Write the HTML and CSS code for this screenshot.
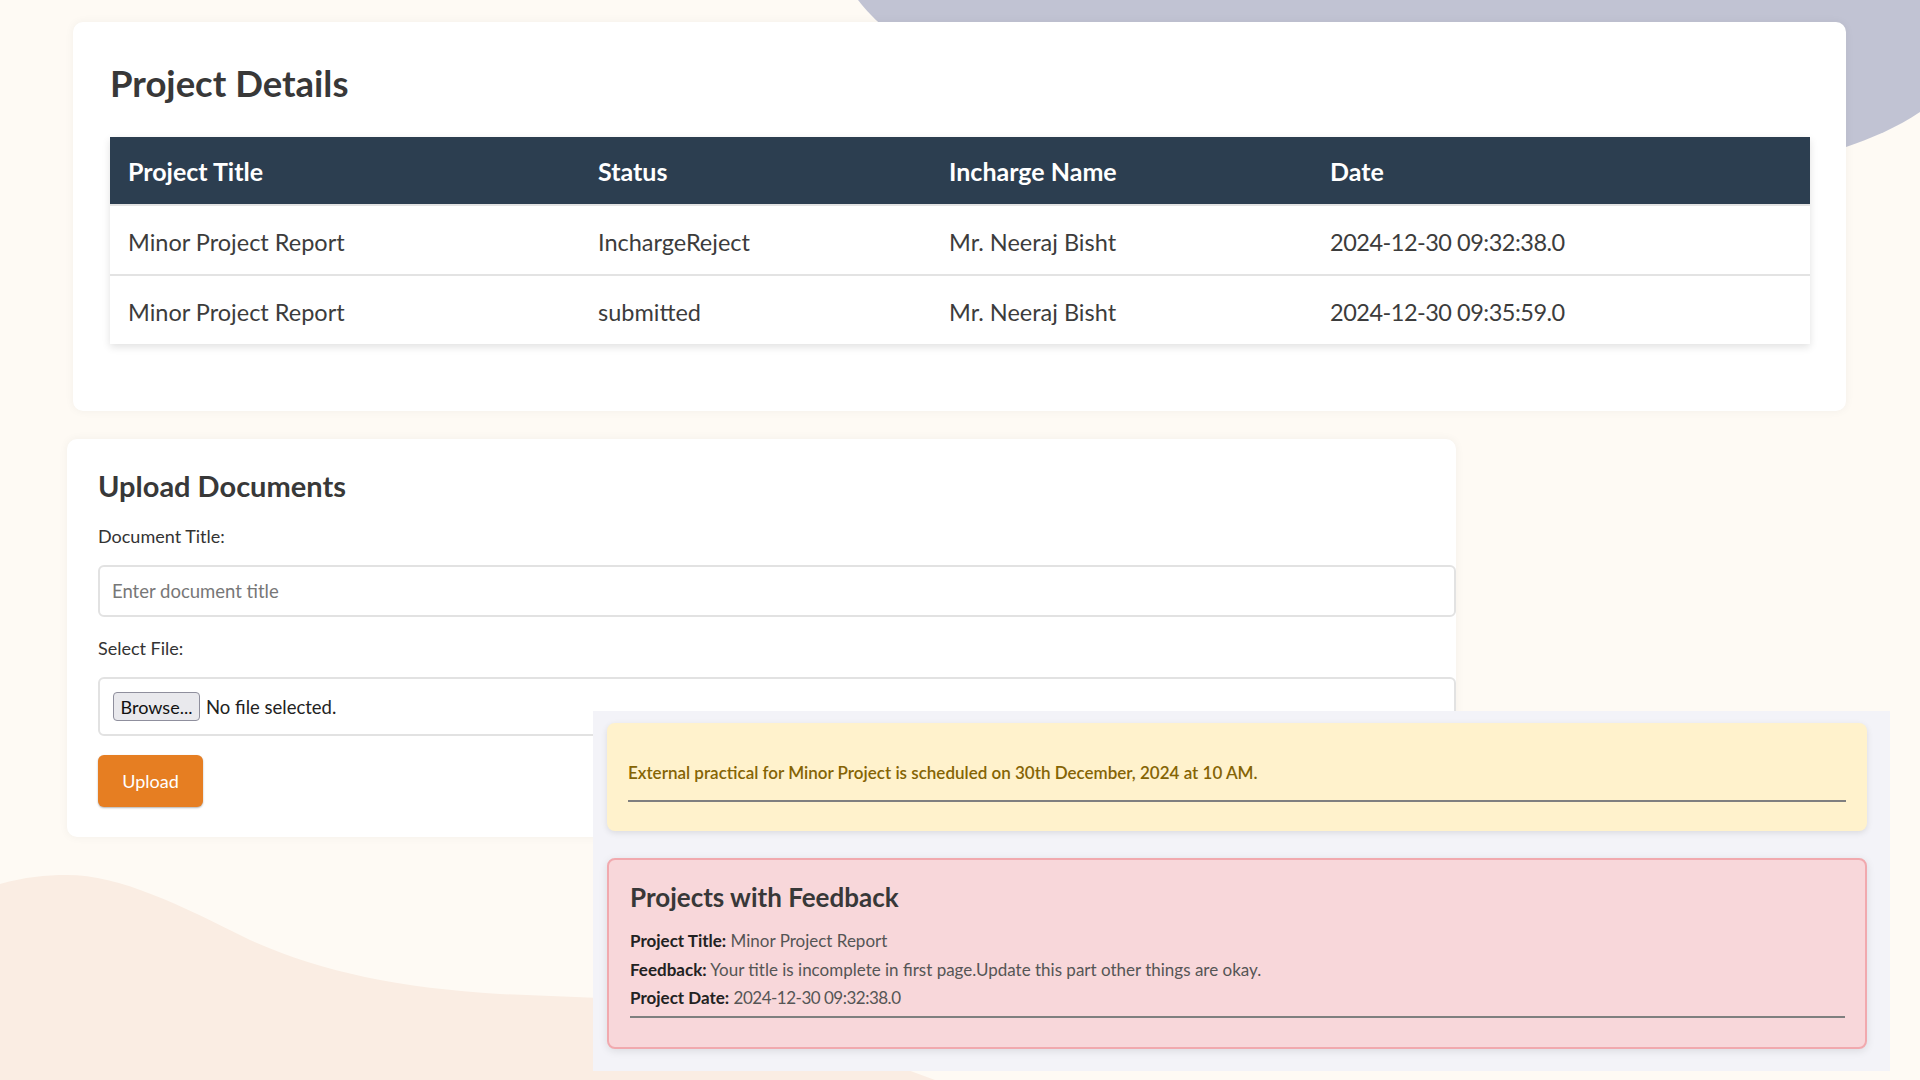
FILE: index.html
```html
<!DOCTYPE html>
<html lang="en">
<head>
<meta charset="utf-8">
<title>Project Details</title>
<link rel="stylesheet" href="styles.css">
</head>
<body>
<svg class="bg-shapes" width="1920" height="1080" viewBox="0 0 1920 1080" aria-hidden="true">
  <path class="blob" d="M858,0 C870,15 880,25 895,35 L1846,147 C1870,139 1898,127 1920,112 L1920,0 Z"/>
  <path class="wave" d="M0,884 C25,877 45,875 67,875 C120,875 180,905 250,940 C320,972 400,988 500,994 L600,998 C700,1002 800,1030 935,1080 L0,1080 Z"/>
</svg>

<main class="page">
  <section class="card details-card">
    <h1 class="card-title">Project Details</h1>
    <table class="project-table">
      <colgroup>
        <col class="c1"><col class="c2"><col class="c3"><col class="c4">
      </colgroup>
      <thead>
        <tr><th>Project Title</th><th>Status</th><th>Incharge Name</th><th>Date</th></tr>
      </thead>
      <tbody>
        <tr><td>Minor Project Report</td><td>InchargeReject</td><td>Mr. Neeraj Bisht</td><td class="date">2024-12-30 09:32:38.0</td></tr>
        <tr><td>Minor Project Report</td><td>submitted</td><td>Mr. Neeraj Bisht</td><td class="date">2024-12-30 09:35:59.0</td></tr>
      </tbody>
    </table>
  </section>

  <section class="card upload-card">
    <h2 class="upload-title">Upload Documents</h2>
    <label class="field-label" for="docTitle">Document Title:</label>
    <input class="text-input" id="docTitle" type="text" placeholder="Enter document title">
    <label class="field-label">Select File:</label>
    <div class="file-box">
      <span class="browse-btn">Browse...</span>
      <span class="file-name">No file selected.</span>
    </div>
    <button class="upload-btn" type="button">Upload</button>
  </section>
</main>

<aside class="notice-panel">
  <div class="alert-box">
    <p class="alert-text">External practical for Minor Project is scheduled on 30th December, 2024 at 10 AM.</p>
    <hr class="rule">
  </div>
  <div class="feedback-box">
    <h3 class="feedback-title">Projects with Feedback</h3>
    <p class="fb-line"><strong>Project Title:</strong> Minor Project Report</p>
    <p class="fb-line"><strong>Feedback:</strong> Your title is incomplete in first page.Update this part other things are okay.</p>
    <p class="fb-line"><strong>Project Date:</strong> <span class="date">2024-12-30 09:32:38.0</span></p>
    <hr class="rule">
  </div>
</aside>
</body>
</html>
```

FILE: styles.css
```css
* { box-sizing: border-box; }

html, body {
  margin: 0;
  padding: 0;
}

body {
  width: 1920px;
  height: 1080px;
  overflow: hidden;
  position: relative;
  background: #fefaf4;
  font-family: "Lato", "Open Sans", sans-serif;
  color: #333;
}

.bg-shapes {
  position: absolute;
  left: 0;
  top: 0;
  z-index: 0;
}
.blob { fill: #c1c3d3; }
.wave { fill: #faede3; }

.page {
  position: relative;
  z-index: 1;
  display: flex;
  flex-direction: column;
  align-items: flex-start;
  padding-top: 22px;
}

.card {
  background: #fff;
  border-radius: 10px;
  box-shadow: 0 0 10px rgba(0, 0, 0, 0.05);
}

/* Project details */
.details-card {
  margin-left: 73px;
  width: 1773px;
  height: 389px;
  padding: 40px 36px 0 37px;
}

.card-title {
  margin: 0 0 33px;
  font-size: 36.5px;
  line-height: 42px;
  font-weight: 700;
  color: #383838;
}

.project-table {
  width: 1700px;
  border-collapse: collapse;
  box-shadow: 0 3px 8px rgba(0, 0, 0, 0.12);
  background: #fff;
}
.c1 { width: 470px; }
.c2 { width: 351px; }
.c3 { width: 381px; }
.c4 { width: 498px; }

.project-table th {
  background: #2c3e50;
  color: #fff;
  text-align: left;
  font-size: 25px;
  font-weight: 700;
  line-height: 27px;
  padding: 21px 18px 19px;
}

.project-table td {
  font-size: 23.5px;
  line-height: 30px;
  padding: 21px 18px 17px;
  color: #3c3c3c;
  border-top: 2px solid #e3e3e3;
}

.date { letter-spacing: -0.5px; }

/* Upload */
.upload-card {
  margin-left: 67px;
  margin-top: 28px;
  width: 1389px;
  height: 398px;
  padding: 30px 0 0 31px;
  display: flex;
  flex-direction: column;
  align-items: flex-start;
}

.upload-title {
  margin: 0 0 22px;
  font-size: 29px;
  line-height: 34px;
  font-weight: 700;
  color: #383838;
}

.field-label {
  font-size: 18px;
  line-height: 22px;
  color: #333;
  margin-bottom: 18px;
}

.text-input {
  width: 100%;
  height: 52px;
  border: 2px solid #e2e2e2;
  border-radius: 6px;
  padding: 0 12px;
  font-family: inherit;
  font-size: 18.5px;
  color: #333;
  background: #fff;
  margin: 0 0 20px;
  outline: none;
}
.text-input::placeholder { color: #777; }

.file-box {
  width: 100%;
  height: 59px;
  border: 2px solid #e2e2e2;
  border-radius: 6px;
  padding: 0 13px;
  display: flex;
  align-items: center;
  gap: 6px;
  margin-bottom: 19px;
  font-size: 18.5px;
  color: #222;
}

.browse-btn {
  width: 87px;
  height: 29px;
  display: flex;
  align-items: center;
  justify-content: center;
  background: #e9e9ed;
  border: 1px solid #8f8f9d;
  border-radius: 4px;
  font-size: 18px;
  color: #111;
}

.upload-btn {
  width: 105px;
  height: 52px;
  border: none;
  border-radius: 6px;
  background: #e67e22;
  color: #fff;
  font-family: inherit;
  font-size: 18px;
  box-shadow: 0 1px 2px rgba(0, 0, 0, 0.3);
}

/* Notice panel overlay */
.notice-panel {
  position: absolute;
  z-index: 2;
  left: 593px;
  top: 711px;
  width: 1297px;
  height: 360px;
  background: #f3f3f8;
  padding: 12px 23px 0 14px;
  display: flex;
  flex-direction: column;
  gap: 27px;
}

.alert-box {
  height: 108px;
  background: #fff2cc;
  border-radius: 8px;
  box-shadow: 0 2px 6px rgba(0, 0, 0, 0.1);
  padding: 39px 21px 0;
}

.alert-text {
  margin: 0;
  font-size: 17px;
  line-height: 22px;
  font-weight: 600;
  color: #856404;
}

.rule {
  margin: 0;
  border: none;
  border-top: 2px solid #7f7f7f;
}

.alert-box .rule { margin-top: 16px; }

.feedback-box {
  height: 191px;
  background: #f8d7da;
  border: 2px solid #f1a9ae;
  border-radius: 8px;
  box-shadow: 0 2px 8px rgba(0, 0, 0, 0.1);
  padding: 22px 20px 0 21px;
}

.feedback-title {
  margin: 0 0 15px;
  font-size: 26px;
  line-height: 30px;
  font-weight: 700;
  color: #383838;
}

.fb-line {
  margin: 0;
  font-size: 17px;
  line-height: 28.5px;
  color: #555;
}
.fb-line strong { color: #222; font-weight: 700; }

.feedback-box .rule { margin-top: 3px; }
```
